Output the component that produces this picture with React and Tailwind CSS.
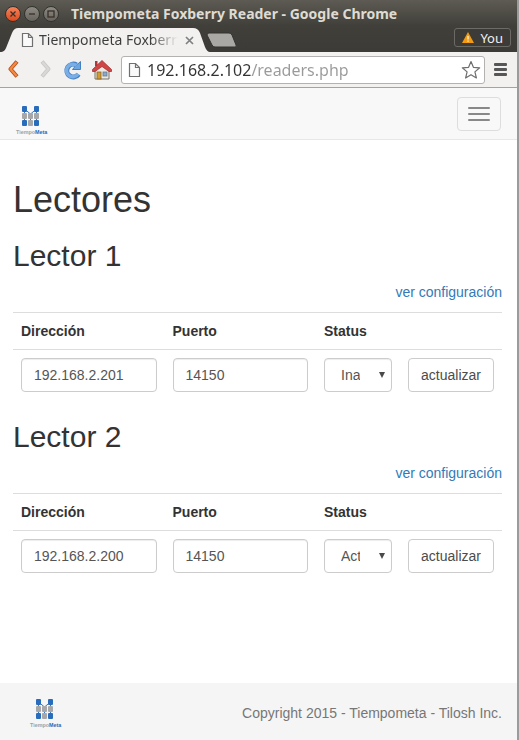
import React from "react";

function TiempoMetaLogo() {
  return (
    <svg width="34" height="32" viewBox="0 0 34 32" role="img" aria-label="TiempoMeta">
      <path d="M10.5 5L16.5 10L22.5 5M10.5 5V20M22.5 5V20M16.5 11V20" stroke="#3d79c0" strokeWidth="1" fill="none" />
      <g fill="#2a6cbc">
        <rect x="8" y="2" width="5" height="6" rx="1" />
        <rect x="20" y="2" width="5" height="6" rx="1" />
        <rect x="8" y="16" width="5" height="6" rx="1" />
        <rect x="20" y="16" width="5" height="6" rx="1" />
      </g>
      <g fill="#a5a7a8">
        <rect x="8" y="9" width="5" height="6" rx="1" />
        <rect x="14" y="9" width="5" height="6" rx="1" />
        <rect x="20" y="9" width="5" height="6" rx="1" />
        <rect x="14" y="16" width="5" height="6" rx="1" />
      </g>
      <text x="2" y="30" fontSize="5.4" fontWeight="bold" fontFamily="Liberation Sans, sans-serif" fill="#a0a1a2">
        Tiempo<tspan fill="#2468bb">Meta</tspan>
      </text>
    </svg>
  );
}

function PageIcon() {
  return (
    <svg width="13" height="16" viewBox="0 0 13 16" aria-hidden="true">
      <path d="M1.5 1.5H7.5L11.5 5.5V14.5H1.5Z M7.5 1.5V5.5H11.5" fill="#fafafa" stroke="#707070" strokeWidth="1.2" />
    </svg>
  );
}

function WindowButton({ label, close, children }) {
  return (
    <button
      aria-label={label}
      className={
        "flex size-4 items-center justify-center rounded-full border border-[#33322e] " +
        (close ? "bg-linear-to-b from-[#f5825a] to-[#dd4a1c]" : "bg-linear-to-b from-[#8d8b83] to-[#66645d]")
      }
    >
      <svg width="8" height="8" viewBox="0 0 8 8" className="shrink-0" fill="none" stroke="#3a2f29" strokeWidth="1.3">
        {children}
      </svg>
    </button>
  );
}

function BrowserChrome() {
  return (
    <header className="font-['Noto_Sans',sans-serif]">
      <div className="bg-linear-to-b from-[#5d5b53] via-[#403f3a] to-[#3c3b37]">
        <div className="flex h-7 items-center pl-[5px]">
          <div className="flex gap-[3px]">
            <WindowButton label="Cerrar" close>
              <path d="M1.5 1.5L6.5 6.5M6.5 1.5L1.5 6.5" />
            </WindowButton>
            <WindowButton label="Minimizar">
              <path d="M1 4H7" />
            </WindowButton>
            <WindowButton label="Maximizar">
              <rect x="1" y="1" width="6" height="6" />
            </WindowButton>
          </div>
          <div className="ml-3 truncate text-[14px] font-bold text-[#dfdbd2]">
            Tiempometa Foxberry Reader - Google Chrome
          </div>
        </div>
        <div className="flex h-6 items-start">
          <div className="relative h-6 w-[210px] shrink-0">
            <svg className="absolute inset-0" width="210" height="24" viewBox="0 0 210 24" aria-hidden="true">
              <path d="M0 24C4 24 5 22 6 20L12 5Q14 0 18 0H193Q198 0 200 5L205 19Q207 24 210 24Z" fill="#f2f1f0" />
            </svg>
            <div className="relative flex h-6 items-center pl-[21px]">
              <PageIcon />
              <span className="ml-[5px] w-[139px] overflow-hidden bg-linear-to-r from-[#3c3c3c] from-80% to-transparent bg-clip-text text-[14px] whitespace-nowrap text-transparent">
                Tiempometa Foxberry
              </span>
              <button aria-label="Cerrar pestaña" className="ml-[7px]">
                <svg width="9" height="9" viewBox="0 0 9 9" stroke="#808080" strokeWidth="1.7">
                  <path d="M1 1L8 8M8 1L1 8" />
                </svg>
              </button>
            </div>
          </div>
          <button aria-label="Nueva pestaña" className="mt-1 -ml-1">
            <svg width="32" height="16" viewBox="0 0 32 16">
              <path d="M3 1H23Q25 1 26 3L30 13Q31 15 29 15H9Q7 15 6 13L1 3Q1 1 3 1Z" fill="#a9a8a5" stroke="#34332f" />
            </svg>
          </button>
          <button className="mr-[6px] ml-auto flex h-[19px] items-center gap-[6px] rounded-[3px] border border-[#6b6a64] bg-[#3c3b37] px-[7px] text-[13px] text-[#f2f1f0]">
            <svg width="12" height="11" viewBox="0 0 12 11" aria-hidden="true">
              <path d="M6 0L12 11H0Z" fill="#f39a10" />
              <path d="M6 4V7.5M6 8.5V9.8" stroke="#fff" strokeWidth="1.2" />
            </svg>
            You
          </button>
        </div>
      </div>
      <div className="flex h-9 items-center border-b border-[#a3a3a3] bg-[#f2f1f0] pr-[9px] pl-2">
        <button aria-label="Atrás">
          <svg width="13" height="20" viewBox="0 0 13 20" fill="none" strokeLinejoin="round">
            <path d="M9 1.5L2.5 9L9 16.5" stroke="#b9501c" strokeWidth="4" />
            <path d="M8.6 2L2.5 9L8.6 16" stroke="#f28a44" strokeWidth="2.2" />
          </svg>
        </button>
        <button aria-label="Adelante" className="ml-[18px]">
          <svg width="13" height="20" viewBox="0 0 13 20" fill="none" strokeLinejoin="round">
            <path d="M3 1.5L9.5 9L3 16.5" stroke="#c9c8c6" strokeWidth="4" />
            <path d="M3.4 2L9.5 9L3.4 16" stroke="#d9d8d6" strokeWidth="2.2" />
          </svg>
        </button>
        <button aria-label="Recargar" className="ml-[11px]">
          <svg width="19" height="20" viewBox="0 0 19 20">
            <path d="M15.5 14.2A6.4 6.4 0 1 1 13.5 5" fill="none" stroke="#4380c4" strokeWidth="5" />
            <path d="M17.5 1.5V9.5H9.5L12 6.5Z" fill="#6ea6e0" stroke="#4380c4" strokeLinejoin="round" />
            <path d="M15.1 13.9A6.3 6.3 0 1 1 13.5 5.4" fill="none" stroke="#79afe6" strokeWidth="3.4" />
          </svg>
        </button>
        <button aria-label="Inicio" className="ml-[10px]">
          <svg width="20" height="20" viewBox="0 0 20 20">
            <path d="M3 9V19H17V9L10 3Z" fill="#ece9e2" stroke="#77746c" />
            <rect x="5" y="12" width="4" height="7" fill="#d19b35" stroke="#8b6524" strokeWidth=".8" />
            <rect x="11" y="12" width="4" height="4" fill="#89a9d1" stroke="#6d7888" strokeWidth=".8" />
            <path d="M3 1H5.5V6H3Z" fill="#b33636" />
            <path d="M10 0.5L19.5 9.5V11.5H17L10 6.5L3 11.5H0.5V9.5Z" fill="#cf4646" stroke="#a83030" strokeWidth=".8" strokeLinejoin="round" />
          </svg>
        </button>
        <div className="ml-[9px] flex h-7 min-w-0 grow items-center rounded-[3px] border border-[#b3b2b0] bg-white pr-[3px] pl-[6px]">
          <PageIcon />
          <input
            aria-label="Dirección web"
            defaultValue="192.168.2.102/readers.php"
            className="ml-[6px] min-w-0 grow bg-linear-to-r from-[#333333] from-[105px] to-[#9a9a9a] to-[105px] bg-clip-text text-[16px] leading-6 text-transparent outline-none"
          />
          <button aria-label="Marcador">
            <svg width="20" height="20" viewBox="0 0 20 20">
              <path d="M10 1.5L12.4 7.3L18.7 7.8L13.9 11.9L15.4 18L10 14.7L4.6 18L6.1 11.9L1.3 7.8L7.6 7.3Z" fill="#fff" stroke="#6e6e6e" strokeWidth="1.2" strokeLinejoin="round" />
            </svg>
          </button>
        </div>
        <button aria-label="Menú de Chrome" className="ml-[9px]">
          <svg width="14" height="14" viewBox="0 0 14 14" fill="#565656">
            <rect x="0" y="0" width="13" height="3" rx="1" />
            <rect x="0" y="5" width="13" height="3" rx="1" />
            <rect x="0" y="10" width="13" height="3" rx="1" />
          </svg>
        </button>
      </div>
    </header>
  );
}

const fieldClass =
  "block h-[34px] w-full rounded-[4px] border border-[#cccccc] bg-white px-3 text-[14px] text-[#555555] shadow-[inset_0_1px_1px_rgba(0,0,0,0.075)]";

function Reader({ id, address, port, status }) {
  return (
    <section className="mb-5">
      <h2 className="mb-[10px] text-[30px] leading-[33px]">Lector {id}</h2>
      <p className="mb-[10px] text-right">
        <a href="#configuracion" className="text-[#337ab7]">
          ver configuración
        </a>
      </p>
      <table className="w-full table-fixed text-left">
        <colgroup>
          <col />
          <col />
          <col className="w-[84px]" />
          <col className="w-[102px]" />
        </colgroup>
        <thead>
          <tr className="border-t border-[#dddddd]">
            <th className="p-2">Dirección</th>
            <th className="p-2">Puerto</th>
            <th className="p-2">Status</th>
            <th className="p-2" />
          </tr>
        </thead>
        <tbody>
          <tr className="border-t border-[#dddddd]">
            <td className="p-2">
              <input aria-label="Dirección" defaultValue={address} className={fieldClass} />
            </td>
            <td className="p-2">
              <input aria-label="Puerto" defaultValue={port} className={fieldClass} />
            </td>
            <td className="p-2">
              <div className="relative">
                <select
                  aria-label="Status"
                  defaultValue={status}
                  className="block h-[34px] w-full appearance-none rounded-[4px] border border-[#cccccc] bg-white pr-[31px] pl-4 text-[14px] text-[#555555] shadow-[inset_0_1px_1px_rgba(0,0,0,0.075)]"
                >
                  <option>Activo</option>
                  <option>Inactivo</option>
                </select>
                <svg className="pointer-events-none absolute top-[14px] right-[7px]" width="6" height="6" viewBox="0 0 6 6" aria-hidden="true">
                  <path d="M0 0H6L3 6Z" fill="#4a4a4a" />
                </svg>
              </div>
            </td>
            <td className="p-2">
              <button className="block h-[34px] w-full rounded-[4px] border border-[#cccccc] bg-white text-[14px] text-[#4c4c4c]">
                actualizar
              </button>
            </td>
          </tr>
        </tbody>
      </table>
    </section>
  );
}

export default function App() {
  return (
    <div className="flex min-h-screen flex-col border-r-2 border-[#9b9b9b] bg-white font-['Liberation_Sans',Arial,sans-serif] text-[14px] leading-5 text-[#333333]">
      <BrowserChrome />
      <nav className="flex items-end justify-between border-b border-[#e7e7e7] bg-[#f8f8f8] pt-[9px] pr-4 pb-[3px] pl-[14px]">
        <a href="#inicio">
          <TiempoMetaLogo />
        </a>
        <button
          aria-label="Menú"
          className="mb-[5px] flex h-[34px] w-11 flex-col items-center justify-center gap-1 rounded-[4px] border border-[#dddddd]"
        >
          <span className="h-[2px] w-[22px] rounded-[1px] bg-[#888888]" />
          <span className="h-[2px] w-[22px] rounded-[1px] bg-[#888888]" />
          <span className="h-[2px] w-[22px] rounded-[1px] bg-[#888888]" />
        </button>
      </nav>
      <main className="grow pt-10 pr-[15px] pl-[13px]">
        <h1 className="mb-[19px] text-[36px] leading-10">Lectores</h1>
        <Reader id={1} address="192.168.2.201" port="14150" status="Inactivo" />
        <Reader id={2} address="192.168.2.200" port="14150" status="Activo" />
      </main>
      <footer className="flex items-center justify-between bg-[#f5f5f5] pt-[14px] pr-[15px] pb-[11px] pl-7">
        <TiempoMetaLogo />
        <p className="text-[#777777]">Copyright 2015 - Tiempometa - Tilosh Inc.</p>
      </footer>
    </div>
  );
}
